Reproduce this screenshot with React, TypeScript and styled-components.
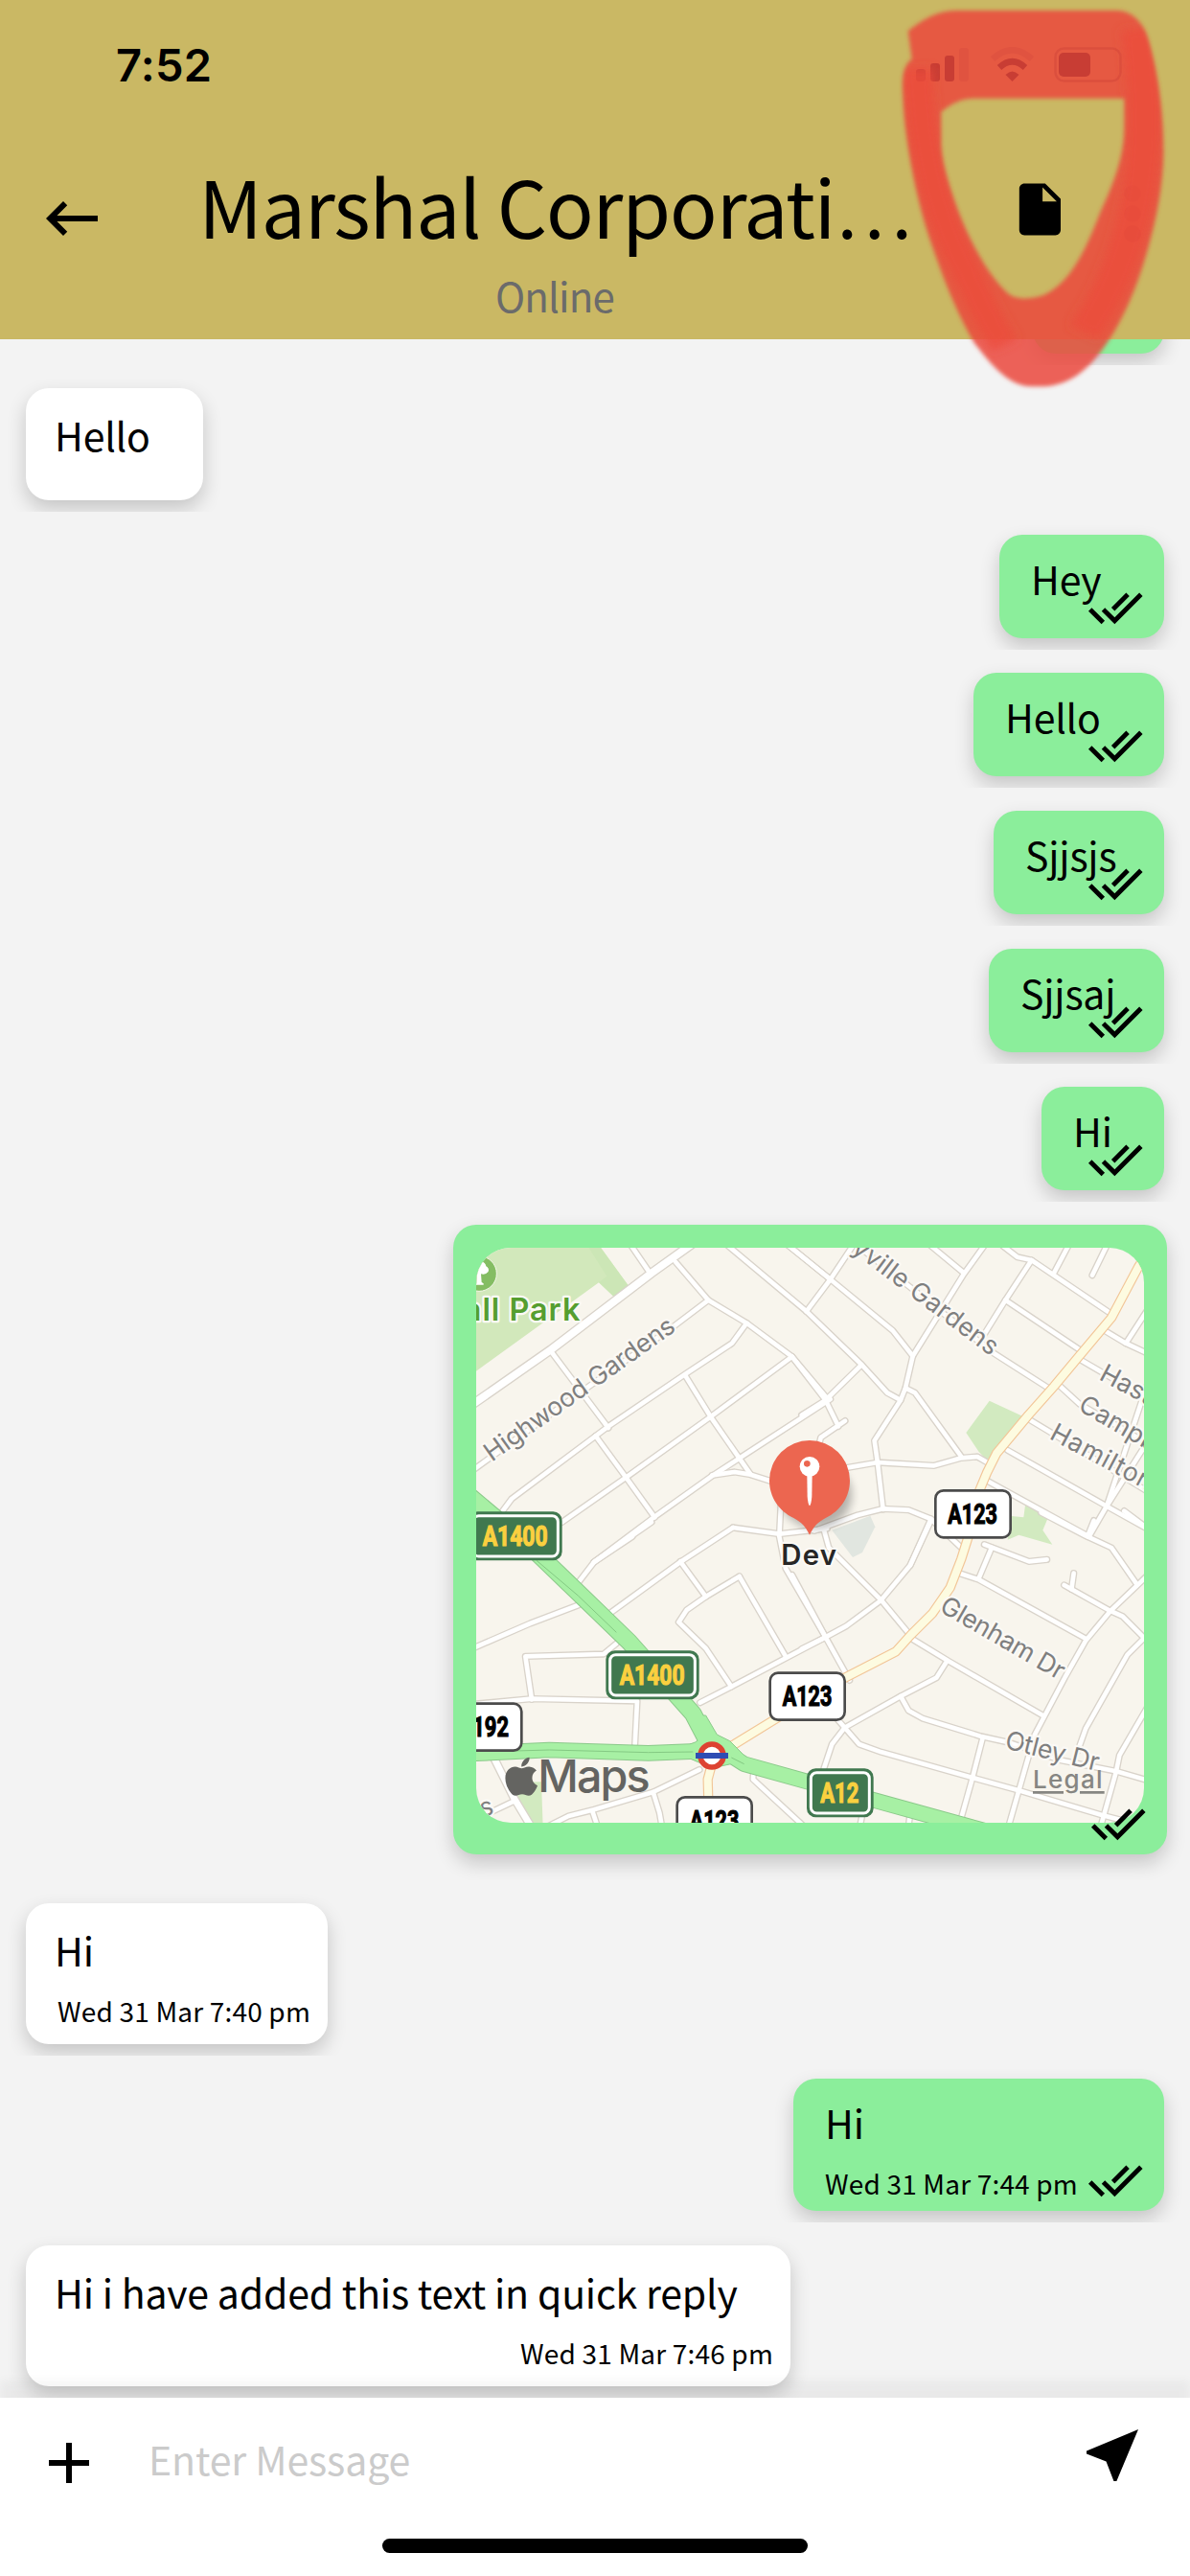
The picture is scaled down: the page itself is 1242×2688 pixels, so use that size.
import React from "react";
import styled, { createGlobalStyle, css } from "styled-components";
import { FaApple } from "react-icons/fa";

const GlobalStyle = createGlobalStyle`
  *, *::before, *::after { box-sizing: border-box; }
  body { margin: 0; background: #f3f3f3; }
  svg { display: block; }
`;

const uiFont = `"Noto Sans CJK SC", "Open Sans", sans-serif`;
const systemFont = `Inter, Roboto, sans-serif`;

/* ---------- layout ---------- */

const Screen = styled.div`
  position: relative;
  display: flex;
  flex-direction: column;
  width: 1242px;
  height: 2688px;
  overflow: hidden;
  background: #f3f3f3;
  color: #000;
  font-family: ${uiFont};
`;

const Header = styled.header`
  display: flex;
  flex-direction: column;
  flex: none;
  height: 354px;
  background: #cab864;
`;

const StatusBar = styled.div`
  display: flex;
  justify-content: space-between;
  height: 132px;
  padding: 44px 64px 0 121px;
`;

const Clock = styled.span`
  font: 600 47px/48px ${systemFont};
  letter-spacing: 0.2px;
`;

const StatusIcons = styled.div`
  display: flex;
  gap: 20px;
  padding-top: 5px;
`;

const NavBar = styled.div`
  display: grid;
  grid-template-columns: 72px 744px 1fr;
  column-gap: 96px;
  flex: 1;
  padding-left: 39px;
`;

const BackButton = styled.div`
  padding-top: 60px;
`;

const TitleBlock = styled.div`
  display: flex;
  flex-direction: column;
  align-items: center;
  gap: 18px;
  padding-top: 32px;
`;

const Title = styled.h1`
  margin: 0;
  font-size: 82px;
  font-weight: 400;
  line-height: 100px;
  letter-spacing: -1.1px;
  white-space: nowrap;
`;

const Ellipsis = styled.span`
  font-size: 76px;
  line-height: 0;
`;

const Presence = styled.span`
  font-size: 42px;
  line-height: 52px;
  letter-spacing: -0.9px;
  color: #6b6b6b;
`;

const Actions = styled.div`
  display: flex;
  align-items: flex-start;
  gap: 54px;
  padding: 54px 0 0 6px;
`;

const Messages = styled.main`
  display: flex;
  flex-direction: column;
  justify-content: flex-end;
  flex: none;
  height: 2148px;
  overflow: hidden;
`;

const Row = styled.div<{ $own?: boolean; $wide?: boolean }>`
  display: flex;
  flex: none;
  justify-content: ${(p) => (p.$own ? "flex-end" : "flex-start")};
  padding: ${(p) => (p.$wide ? "24px 24px 27px" : "24px 27px 12px")};
  overflow: hidden;
`;

const Bubble = styled.div<{ $own?: boolean; $w: number; $h: number }>`
  position: relative;
  display: flex;
  flex-direction: column;
  width: ${(p) => p.$w}px;
  height: ${(p) => p.$h}px;
  border-radius: 24px;
  box-shadow: 0 9px 20px rgba(0, 0, 0, 0.19);
  ${(p) =>
    p.$own
      ? css`
          background: #8bee9b;
          padding: 19px 0 0 33px;
        `
      : css`
          background: #fff;
          padding: 22px 18px 0 30px;
        `}
`;

const MapBubble = styled(Bubble)`
  padding: 24px;
`;

const MapFrame = styled.div`
  width: 697px;
  height: 600px;
  border-radius: 36px;
  overflow: hidden;
`;

const Text = styled.p`
  margin: 0;
  font-size: 41px;
  line-height: 52px;
  letter-spacing: -0.2px;
  white-space: nowrap;
`;

const Time = styled.time<{ $end?: boolean }>`
  align-self: ${(p) => (p.$end ? "flex-end" : "flex-start")};
  margin-top: 20px;
  font-size: 28px;
  line-height: 36px;
  letter-spacing: 0.18px;
  white-space: nowrap;
`;

const ReadMark = styled.span`
  position: absolute;
  right: 22px;
  bottom: 3px;
`;

const Composer = styled.footer`
  position: relative;
  display: flex;
  flex-direction: column;
  justify-content: space-between;
  align-items: center;
  flex: 1;
  padding-bottom: 24px;
  background: #fff;
  box-shadow: 0 -18px 9px rgba(0, 0, 0, 0.04);
`;

const InputRow = styled.div`
  display: flex;
  align-items: flex-start;
  width: 100%;
  padding: 24px 45px 0 36px;
`;

const PlusSlot = styled.div`
  padding-top: 8px;
`;

const Placeholder = styled.span`
  flex: 1;
  padding: 13px 0 0 47px;
  font-size: 41px;
  line-height: 52px;
  letter-spacing: -0.1px;
  color: #cbcbcb;
`;

const HomeIndicator = styled.div`
  width: 444px;
  height: 15px;
  border-radius: 8px;
  background: #000;
`;

const Scribble = styled.svg`
  position: absolute;
  left: 621px;
  top: 0;
  width: 621px;
  height: 420px;
  pointer-events: none;
`;

/* ---------- icons ---------- */

const Glyph = ({ d, size }: { d: string; size: number }) => (
  <svg width={size} height={size} viewBox="0 0 24 24" fill="#000">
    <path d={d} />
  </svg>
);

const BACK = "M21 11H6.83l3.58-3.59L9 6l-6 6 6 6 1.41-1.41L6.83 13H21v-2z";
const FILE =
  "M6 2c-1.1 0-1.99.9-1.99 2L4 20c0 1.1.89 2 1.99 2H18c1.1 0 2-.9 2-2V8l-6-6H6zm7 7V3.5L18.5 9H13z";
const DONE_ALL =
  "M18 7l-1.41-1.41-6.34 6.34 1.41 1.41L18 7zm4.24-1.41L11.66 16.17 7.48 12l-1.41 1.41L11.66 19l12-12-1.42-1.41zM.41 13.41L6 19l1.41-1.41L1.83 12 .41 13.41z";
const ADD = "M19 13h-6v6h-2v-6H5v-2h6V5h2v6h6v2z";
const NEAR_ME = "M21 3L3 10.53v.98l6.84 2.65L12.48 21h.98L21 3z";

const Read = () => (
  <ReadMark>
    <Glyph d={DONE_ALL} size={58.4} />
  </ReadMark>
);

const Signal = () => (
  <svg width="57" height="38" viewBox="0 0 57 38">
    <rect x="0" y="23" width="10" height="13" rx="3" opacity="0.8" />
    <rect x="15" y="17" width="10" height="19" rx="3" />
    <rect x="30" y="9" width="10" height="27" rx="3" />
    <rect x="45" y="1" width="10" height="35" rx="3" opacity="0.2" />
  </svg>
);

const Wifi = () => (
  <svg width="47" height="38" viewBox="0 0 47 38" fill="none" stroke="#000">
    <path d="M3 12.5Q23.500 -6 44 12.500" strokeWidth="6.500" opacity="0.2" />
    <path d="M10 21.500Q23.500 9 37 21.500" strokeWidth="6.500" />
    <path d="M16.500 29Q23.500 22 30.500 29L23.500 36Z" fill="#000" stroke="none" />
  </svg>
);

const Battery = () => (
  <svg width="78" height="38" viewBox="0 0 78 38">
    <rect x="1.500" y="1.500" width="68" height="34" rx="9" fill="none" stroke="#000" strokeWidth="2.500" opacity="0.35" />
    <rect x="5" y="6" width="33" height="25" rx="5" />
  </svg>
);

const MoreDots = () => (
  <svg width="20" height="69" viewBox="0 -5 20 69">
    <circle cx="10" cy="11" r="9" opacity="0.22" />
    <circle cx="10" cy="32" r="9" opacity="0.26" />
    <circle cx="10" cy="53" r="9" opacity="0.34" />
  </svg>
);

/* ---------- map ---------- */

type Tile = { x: number; y: number; roads: string[] };

const tiles: Tile[] = [
  {
    x: 0,
    y: 0,
    roads: [
      "M590 110L655 205",
      "M735 170L838 290L958 362L1100 467L1210 598",
      "M838 290L735 368L450 570L90 830",
      "M345 450L525 690",
      "M958 362L912 425L765 522L525 685L485 715L222 912L190 955",
      "M485 715L580 845L670 970",
      "M765 525L845 655L935 785L970 835",
      "M1100 467L845 655L580 845L380 985",
      "M1220 600L935 785L850 840L670 968L480 1110",
      "M850 838L920 828L970 836L1050 862",
      "M900 120L1145 325",
      "M1090 120L1220 225",
    ],
  },
  {
    x: 1140,
    y: 0,
    roads: [
      "M-50 120L80 225L275 385L338 465",
      "M150 120L80 225L5 325",
      "M5 325L178 492L258 580L300 603",
      "M565 115L498 208L338 465L315 565L300 603L218 730L228 800L245 945",
      "M395 120L498 205",
      "M-10 650L65 603L178 492",
      "M-40 467L65 603L105 685M126 668L50 720L45 740",
      "M315 565L345 580L490 780",
      "M130 815L228 798L405 808L490 784L540 780L575 800",
      "M30 1012L165 963L245 943L325 947L395 975L495 1070",
      "M395 975L330 1120",
      "M620 120L665 155L710 165L955 330",
      "M710 165L628 290L560 400",
      "M825 120L780 205",
      "M945 120L900 212",
      "M628 290L860 445",
      "M90 60L590 455L770 570",
      "M930 380L1005 425L1080 460",
      "M1070 325L1005 425",
      "M860 475L1075 600",
      "M800 560L860 615L1075 740",
      "M705 665L780 710L1075 890",
      "M635 760L945 935L1080 1010",
      "M570 855L880 1025",
      "M1070 560L945 935L890 1030",
      "M1075 730L945 935",
    ],
  },
  {
    x: 0,
    y: 990,
    roads: [
      "M915 12L1060 32L1210 15",
      "M600 40L480 120L430 185",
      "M915 12L750 120L530 280",
      "M750 118L830 228",
      "M1065 -60L1060 40L1080 140L1205 355",
      "M935 165L830 228L770 270L745 308L830 390L910 510",
      "M935 165L1080 415",
      "M812 560L910 510L1205 355",
      "M430 255L280 312L100 390",
      "M550 375L510 408L265 415L285 550",
      "M100 565L285 548L615 555L608 690",
      "M100 930L230 868",
      "M340 945L400 915L480 895L665 840L810 770",
      "M475 900L490 945",
      "M665 840L685 905L692 945",
      "M980 760L978 800L1140 950",
      "M660 -5L480 120",
    ],
  },
  {
    x: 1140,
    y: 990,
    roads: [
      "M395 -10L330 130L238 240L130 320L65 355L-10 392",
      "M60 20L75 75L238 238L335 355",
      "M-40 160L65 355L140 490",
      "M335 360L450 430L745 600",
      "M445 430L412 482L300 540L125 638L85 690L60 765",
      "M300 540L325 585L370 610L550 665L640 685L800 740L975 775L1080 805",
      "M100 610L170 690L240 715L525 795L670 835L930 912L1000 930",
      "M557 670L525 795L490 920",
      "M485 155L545 175L880 360",
      "M585 75L545 170",
      "M562 65L702 118L758 112",
      "M740 -35L880 38L960 75L1040 190",
      "M905 -10L885 40",
      "M1080 155L955 275L880 365L815 480L720 660L670 835L640 940",
      "M812 192L955 272L995 290L1060 355",
      "M842 155L835 205",
      "M1070 350L1010 410L880 640L855 710",
      "M1075 570L985 725L975 775L930 935",
      "M178 920L173 945",
      "M328 920L325 945",
      "M1000 -40L1080 20",
    ],
  },
];

const avenue = "M80 630L345 445L660 205L800 105";
const lane = "M165 1720L230 1850L290 1950";
const yellowRoads =
  "M2205 155L2185 185L2100 345L1995 470L1920 560L1840 650L1740 770L1710 830L1685 890L1652 1030L1630 1100L1595 1190L1540 1270L1470 1340L1425 1390L1260 1475L1050 1600L920 1680L860 1710M852 1730L836 1790L838 1860";
const trunkA1400 = "M80 895L300 1080L430 1205L590 1360L790 1585L850 1700";
const trunkA12 = "M90 1710L340 1698L650 1708L780 1703L850 1700L900 1710L950 1742L1150 1798L1355 1855L1700 1950";

const Halo = styled.text<{ $c?: string }>`
  font-family: ${systemFont};
  fill: ${(p) => p.$c ?? "#7f7f7f"};
  stroke: #fbf9f5;
  stroke-width: 14px;
  stroke-linejoin: round;
  paint-order: stroke;
`;

const SignText = styled.text`
  font: 700 87px Roboto, sans-serif;
  stroke: currentColor;
  stroke-width: 3.5px;
`;

const Street = ({ x, y, r, len, children }: { x: number; y: number; r: number; len?: number; children: string }) => (
  <Halo transform={`translate(${x} ${y}) rotate(${r})`} fontSize="80" textLength={len}>
    {children}
  </Halo>
);

const Sign = ({ x, y, w, trunk, label, tw }: { x: number; y: number; w: number; trunk?: boolean; label: string; tw: number }) => (
  <g color={trunk ? "#fad03f" : "#000"}>
    {trunk ? (
      <>
        <rect x={x} y={y} width={w} height="153" rx="28" fill="#40784f" />
        <rect x={x + 13} y={y + 13} width={w - 26} height="127" rx="18" fill="none" stroke="#fff" strokeWidth="9" />
      </>
    ) : (
      <rect x={x + 4} y={y + 4} width={w - 8} height="147" rx="25" fill="#fff" stroke="#4b4b4b" strokeWidth="8" />
    )}
    <SignText x={x + 43} y={y + 107} textLength={tw} lengthAdjust="spacingAndGlyphs" fill="currentColor">
      {label}
    </SignText>
  </g>
);

const Roads = ({ color, width }: { color: string; width: number }) => (
  <g fill="none" stroke={color} strokeWidth={width} strokeLinecap="round" strokeLinejoin="round">
    {tiles.map((t) => (
      <g key={`${t.x}-${t.y}`} transform={`translate(${t.x} ${t.y})`}>
        {t.roads.map((d) => (
          <path key={d} d={d} />
        ))}
      </g>
    ))}
    <path d={avenue} strokeWidth={width + 9} />
    <path d={lane} strokeWidth={width + 6} />
  </g>
);

const LocationMap = () => (
  <svg width="697" height="600" viewBox="111 126 2091 1800">
    <defs>
      <filter id="pinShadow" x="-30%" y="-30%" width="160%" height="160%">
        <feGaussianBlur stdDeviation="14" />
      </filter>
    </defs>
    <rect x="111" y="126" width="2091" height="1800" fill="#f8f5ed" />
    <path d="M100 120H497L588 245L545 282L495 235L100 520Z" fill="#d2e8bb" />
    <path d="M497 120L588 245L545 282L495 235L520 215L460 120Z" fill="#c9e6b3" opacity="0.7" />
    <path d="M1718 605L1825 655L1740 770L1710 790L1685 765L1645 705Z" fill="#d2eac0" />
    <path d="M1780 965L1825 970L1830 932L1902 970L1885 1010L1915 1055L1810 1025L1775 1040Z" fill="#d2eac0" />
    <path d="M1225 1010L1345 965L1360 1000L1320 1080L1290 1095Z" fill="#e1e6e0" />
    <path d="M225 1800L315 1798L320 1940H280Z" fill="#d2eac0" />

    <Roads color="#d9d3ca" width={22} />
    <Roads color="#ffffff" width={14} />

    <g fill="none" strokeLinejoin="round">
      <path d={yellowRoads} stroke="#f2c698" strokeWidth="31" />
      <path d={yellowRoads} stroke="#fdfbe0" strokeWidth="24" />
      <path d={trunkA1400} stroke="#8bc98a" strokeWidth="56" />
      <path d={trunkA12} stroke="#8bc98a" strokeWidth="50" />
      <path d="M790 1590L815 1640Q820 1670 780 1680V1725L850 1755L940 1735L955 1720L905 1670L865 1650L830 1590Z" fill="#a7f0a4" stroke="#8bc98a" strokeWidth="3" />
      <path d={trunkA1400} stroke="#a7f0a4" strokeWidth="50" />
      <path d={trunkA12} stroke="#a7f0a4" strokeWidth="44" />
      <path d="M300 1105L430 1215L550 1330M200 1702L340 1698L650 1706L790 1704M910 1722L950 1742" stroke="#84c983" strokeWidth="3" />
    </g>

    <circle cx="120" cy="207" r="55" fill="#84bd63" stroke="#f3f6e8" strokeWidth="3" />
    <path d="M112 238V208q-22 2-22-18 4-18 30-18 18-6 22 12 12 6 6 18-8 10-22 6l2 26 6 4v4h-24z" fill="#fff" />
    <Halo x="439" y="355" fontSize="97" fontWeight="600" letterSpacing="3" textAnchor="end" $c="#559e30">
      all Park
    </Halo>

    <Street x={160} y={797} r={-35.500} len={712}>Highwood Gardens</Street>
    <Street x={1284} y={136} r={37} len={548}>yville Gardens</Street>
    <Street x={2058} y={537} r={28}>Hast</Street>
    <Street x={1992} y={632} r={30}>Campb</Street>
    <Street x={1903} y={722} r={28} len={352}>Hamilton</Street>
    <Street x={1558} y={1262} r={30} len={435}>Glenham Dr</Street>
    <Street x={1763} y={1692} r={14} len={300}>Otley Dr</Street>
    <Street x={128} y={1908} r={-14}>s</Street>

    <Sign x={88} y={952} w={292} trunk label="A1400" tw={204} />
    <Sign x={517} y={1387} w={292} trunk label="A1400" tw={204} />
    <Sign x={1146} y={1756} w={209} trunk label="A12" tw={120} />
    <Sign x={1545} y={882} w={243} label="A123" tw={155} />
    <Sign x={1027} y={1453} w={242} label="A123" tw={155} />
    <Sign x={15} y={1549} w={242} label="B192" tw={155} />
    <Sign x={736} y={1842} w={242} label="A123" tw={155} />

    <circle cx="849" cy="1716" r="36" fill="#fff" stroke="#dd4332" strokeWidth="17" />
    <rect x="798" y="1707" width="102" height="18" fill="#2f4db4" />

    <ellipse cx="1175" cy="900" rx="112" ry="105" fill="#000" opacity="0.28" filter="url(#pinShadow)" />
    <path
      d="M1155 1025C1143 1000 1130 985 1105 972C1058 950 1029 905 1029 855A126 126 0 0 1 1281 855C1281 905 1252 950 1205 972C1180 985 1167 1000 1155 1025Z"
      fill="#ec6650"
    />
    <circle cx="1155" cy="811" r="31" fill="#fff" />
    <circle cx="1147" cy="802" r="10" fill="#ec6650" />
    <path d="M1147 838H1163L1162 905Q1160 930 1155 934Q1150 930 1148 905Z" fill="#fff" />
    <Halo x="1066" y="1119" fontSize="88" fontWeight="600" textLength="173" $c="#262626">
      Dev
    </Halo>

    <g fill="#646461">
      <FaApple x={184} y={1713} size={137} color="#646461" />
      <text x="304" y="1831" fontSize="140" fontFamily={systemFont} fontWeight="500" textLength="352">
        Maps
      </text>
    </g>
    <g fill="#868682">
      <text x="1854" y="1818" fontSize="78" fontFamily={systemFont} fontWeight="500" textLength="218">
        Legal
      </text>
      <path d="M1854 1827H1950V1835H1854ZM2001 1827H2078V1835H2001Z" />
    </g>
  </svg>
);

/* ---------- red marker drawing ---------- */

const markerOutline =
  "M825 97C850 75 890 35 950 33H1380C1420 38 1445 70 1458 130C1480 220 1498 340 1498 480C1496 620 1465 760 1430 880C1390 1010 1330 1130 1270 1175C1220 1212 1190 1210 1150 1210C1090 1208 1050 1150 1000 1075C950 970 920 880 880 740C845 610 815 430 812 300C808 240 815 200 835 185ZM912 350C940 325 960 310 995 308H1395V400C1395 500 1360 590 1330 670C1290 790 1250 890 1180 925C1150 938 1110 938 1090 920C1050 880 1000 790 960 670C935 590 910 500 912 440Z";

const MarkerDrawing = () => (
  <Scribble viewBox="0 0 1568 1260" preserveAspectRatio="none">
    <defs>
      <filter id="soft" x="-10%" y="-10%" width="120%" height="120%">
        <feGaussianBlur stdDeviation="5 6" />
      </filter>
      <filter id="softer" x="-20%" y="-10%" width="140%" height="120%">
        <feGaussianBlur stdDeviation="12 14" />
      </filter>
      <mask id="markerShape" maskUnits="userSpaceOnUse" x="0" y="0" width="1568" height="1260">
        <path filter="url(#soft)" fill="#fff" fillRule="evenodd" d={markerOutline} />
      </mask>
    </defs>
    <path filter="url(#soft)" fill="rgb(235,73,60)" fillOpacity="0.85" fillRule="evenodd" d={markerOutline} />
    <g mask="url(#markerShape)">
      <g filter="url(#softer)" fill="none" stroke="rgb(236,76,60)" strokeOpacity="0.72">
        <path d="M850 215C858 420 890 650 970 830C1010 930 1040 1010 1080 1080" strokeWidth="76" />
        <path d="M1430 90C1450 260 1460 480 1420 680C1390 830 1350 930 1290 1040" strokeWidth="86" />
      </g>
    </g>
  </Scribble>
);

/* ---------- screen ---------- */

const sent = [
  { text: "Hey", width: 172 },
  { text: "Hello", width: 199 },
  { text: "Sjjsjs", width: 178 },
  { text: "Sjjsaj", width: 183 },
  { text: "Hi", width: 128 },
];

export default function App() {
  return (
    <Screen>
      <GlobalStyle />
      <Header>
        <StatusBar>
          <Clock>7:52</Clock>
          <StatusIcons>
            <Signal />
            <Wifi />
            <Battery />
          </StatusIcons>
        </StatusBar>
        <NavBar>
          <BackButton>
            <Glyph d={BACK} size={72} />
          </BackButton>
          <TitleBlock>
            <Title>
              Marshal Corporati<Ellipsis>…</Ellipsis>
            </Title>
            <Presence>Online</Presence>
          </TitleBlock>
          <Actions>
            <Glyph d={FILE} size={64.8} />
            <MoreDots />
          </Actions>
        </NavBar>
      </Header>

      <Messages>
        <Row $own>
          <Bubble $own $w={137} $h={108} />
        </Row>
        <Row>
          <Bubble $w={185} $h={117}>
            <Text>Hello</Text>
          </Bubble>
        </Row>
        {sent.map((m) => (
          <Row $own key={m.text}>
            <Bubble $own $w={m.width} $h={108}>
              <Text>{m.text}</Text>
              <Read />
            </Bubble>
          </Row>
        ))}
        <Row $own $wide>
          <MapBubble $own $w={745} $h={657}>
            <MapFrame>
              <LocationMap />
            </MapFrame>
            <Read />
          </MapBubble>
        </Row>
        <Row>
          <Bubble $w={315} $h={147}>
            <Text>Hi</Text>
            <Time $end>Wed 31 Mar 7:40 pm</Time>
          </Bubble>
        </Row>
        <Row $own>
          <Bubble $own $w={387} $h={138}>
            <Text>Hi</Text>
            <Time>Wed 31 Mar 7:44 pm</Time>
            <Read />
          </Bubble>
        </Row>
        <Row>
          <Bubble $w={798} $h={147}>
            <Text>Hi i have added this text in quick reply</Text>
            <Time $end>Wed 31 Mar 7:46 pm</Time>
          </Bubble>
        </Row>
      </Messages>

      <Composer>
        <InputRow>
          <PlusSlot>
            <Glyph d={ADD} size={72} />
          </PlusSlot>
          <Placeholder>Enter Message</Placeholder>
          <Glyph d={NEAR_ME} size={72} />
        </InputRow>
        <HomeIndicator />
      </Composer>

      <MarkerDrawing />
    </Screen>
  );
}
